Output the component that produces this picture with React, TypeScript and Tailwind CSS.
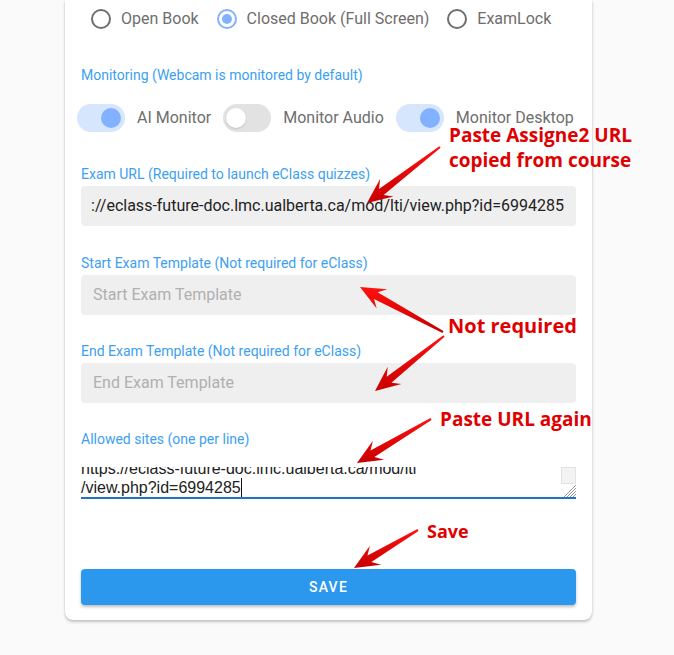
import React from "react";

type Pt = [number, number];

function arrowPoints(x1: number, y1: number, x2: number, y2: number): string {
  const dx = x2 - x1;
  const dy = y2 - y1;
  const L = Math.hypot(dx, dy);
  const c = dx / L;
  const s = dy / L;
  const local: Pt[] = [
    [0, -1],
    [L - 18, -3.8],
    [L - 25, -11],
    [L, 0],
    [L - 25, 11],
    [L - 18, 3.8],
    [0, 1],
  ];
  return local
    .map(([px, py]) => `${(x1 + px * c - py * s).toFixed(1)},${(y1 + px * s + py * c).toFixed(1)}`)
    .join(" ");
}

const arrows: [number, number, number, number][] = [
  [440, 147, 367, 203],
  [443, 332, 360, 287],
  [444, 336, 375, 391],
  [431, 419, 357, 463],
  [418, 530, 354, 568],
];

function Radio({ label, checked }: { label: string; checked?: boolean }) {
  return (
    <div className="flex items-center mr-[18px] shrink-0">
      <span
        className={
          checked
            ? "w-5 h-5 rounded-full border-2 border-[#82b1ff] flex items-center justify-center"
            : "w-5 h-5 rounded-full border-2 border-[#6f6f6f]"
        }
      >
        {checked && <span className="w-[10px] h-[10px] rounded-full bg-[#82b1ff]" />}
      </span>
      <span className="ml-[10px] text-[16px] text-[#6e6e6e] whitespace-nowrap">{label}</span>
    </div>
  );
}

function Toggle({ label, on }: { label: string; on?: boolean }) {
  return (
    <div className="flex items-center mr-3 shrink-0">
      <span
        className={
          on
            ? "w-12 h-7 shrink-0 rounded-full bg-[#d6e6fd] flex items-center justify-end pr-[4px]"
            : "w-12 h-7 shrink-0 rounded-full bg-[#e2e2e2] flex items-center justify-start pl-[3px]"
        }
      >
        <span
          className={
            on
              ? "w-5 h-5 rounded-full bg-[#82b1ff]"
              : "w-5 h-5 rounded-full bg-white shadow-[0_1px_2px_rgba(0,0,0,0.15)]"
          }
        />
      </span>
      <span className="ml-3 text-[16px] text-[#6e6e6e] whitespace-nowrap">{label}</span>
    </div>
  );
}

function Label({ children }: { children: React.ReactNode }) {
  return <div className="h-5 leading-5 text-[14px] text-[#3d9ff0] whitespace-nowrap">{children}</div>;
}

function ValueField({ value }: { value: string }) {
  return (
    <div className="mt-[2px] h-10 rounded-[4px] bg-[#efefef] pl-[10px] pr-3 flex items-center">
      <div className="flex-1 overflow-hidden flex justify-end whitespace-nowrap text-[16px] text-[#222]">
        <span className="shrink-0">{value}</span>
      </div>
    </div>
  );
}

function PlaceholderField({ placeholder }: { placeholder: string }) {
  return (
    <div className="mt-[2px] h-10 rounded-[4px] bg-[#efefef] px-3 flex items-center whitespace-nowrap text-[16px] text-[#b0b0b0]">
      {placeholder}
    </div>
  );
}

export default function App() {
  return (
    <div
      className="relative w-[674px] h-[655px] bg-[#fafafa] overflow-hidden pl-[65px]"
      style={{ fontFamily: "Roboto, 'Noto Sans', sans-serif" }}
    >
      <div className="w-[527px] bg-white rounded-b-[8px] shadow-[0_2px_3px_rgba(0,0,0,0.22),0_0_1px_rgba(0,0,0,0.2)] px-4 pb-[15px]">
        <div className="h-9 pt-[2px] flex items-center ml-[10px]">
          <Radio label="Open Book" />
          <Radio label="Closed Book (Full Screen)" checked />
          <Radio label="ExamLock" />
        </div>

        <div className="mt-[29px]">
          <Label>Monitoring (Webcam is monitored by default)</Label>
        </div>

        <div className="mt-[19px] h-7 flex items-center -ml-1">
          <Toggle label="AI Monitor" on />
          <Toggle label="Monitor Audio" />
          <Toggle label="Monitor Desktop" on />
        </div>

        <div className="mt-[32px]">
          <Label>Exam URL (Required to launch eClass quizzes)</Label>
          <ValueField value="https://eclass-future-doc.lmc.ualberta.ca/mod/lti/view.php?id=6994285" />
        </div>

        <div className="mt-[27px]">
          <Label>Start Exam Template (Not required for eClass)</Label>
          <PlaceholderField placeholder="Start Exam Template" />
        </div>

        <div className="mt-[26px]">
          <Label>End Exam Template (Not required for eClass)</Label>
          <PlaceholderField placeholder="End Exam Template" />
        </div>

        <div className="mt-[26px]">
          <Label>Allowed sites (one per line)</Label>
          <div className="mt-[18px] flex border-b-2 border-[#1f74c8]">
            <div
              className="flex-1 h-[30px] overflow-hidden flex flex-col justify-end text-[16px] leading-[19px] text-[#222]"
              style={{ fontFamily: "'Liberation Sans', Arial, sans-serif" }}
            >
              <div className="whitespace-nowrap shrink-0">https://eclass-future-doc.lmc.ualberta.ca/mod/lti</div>
              <div className="whitespace-nowrap shrink-0 flex items-center">
                /view.php?id=6994285
                <span className="inline-block w-px h-[19px] bg-[#111]" />
              </div>
            </div>
            <div className="w-[15px] flex flex-col">
              <div className="h-[17px] bg-[#f3f3f3] border border-[#e3e3e3]" />
              <div className="flex-1 flex items-end justify-end">
                <svg width="13" height="13" viewBox="0 0 13 13">
                  <g stroke="#9a9a9a" strokeWidth="1">
                    <line x1="13" y1="1" x2="1" y2="13" />
                    <line x1="13" y1="4" x2="4" y2="13" />
                    <line x1="13" y1="7" x2="7" y2="13" />
                    <line x1="13" y1="10" x2="10" y2="13" />
                  </g>
                </svg>
              </div>
            </div>
          </div>
        </div>

        <button className="mt-[70px] w-full h-9 rounded-[4px] bg-[#2b98ee] text-white text-[14px] font-medium tracking-[0.09em] shadow-[0_2px_3px_rgba(0,0,0,0.25)]">
          SAVE
        </button>
      </div>

      <svg className="absolute left-0 top-0 pointer-events-none" width="674" height="655">
        <defs>
          <linearGradient id="ag" x1="0" y1="0" x2="0" y2="1">
            <stop offset="0" stopColor="#ff1010" />
            <stop offset="1" stopColor="#c80000" />
          </linearGradient>
        </defs>
        {arrows.map((a, i) => (
          <polygon key={i} points={arrowPoints(a[0], a[1], a[2], a[3])} fill="url(#ag)" />
        ))}
      </svg>

      <div
        className="absolute left-[449px] top-[123px] text-[19px] leading-[25px] font-bold text-[#e00000] whitespace-nowrap"
        style={{ fontFamily: "'Open Sans', 'Noto Sans', sans-serif" }}
      >
        <div>Paste Assigne2 URL</div>
        <div>copied from course</div>
      </div>
      <div
        className="absolute left-[448px] top-[313px] text-[20px] leading-[26px] font-bold text-[#e00000] whitespace-nowrap"
        style={{ fontFamily: "'Open Sans', 'Noto Sans', sans-serif" }}
      >
        Not required
      </div>
      <div
        className="absolute left-[440px] top-[407px] text-[19px] leading-[25px] font-bold text-[#e00000] whitespace-nowrap"
        style={{ fontFamily: "'Open Sans', 'Noto Sans', sans-serif" }}
      >
        Paste URL again
      </div>
      <div
        className="absolute left-[427px] top-[519px] text-[18px] leading-[24px] font-bold text-[#e00000] whitespace-nowrap"
        style={{ fontFamily: "'Open Sans', 'Noto Sans', sans-serif" }}
      >
        Save
      </div>
    </div>
  );
}
